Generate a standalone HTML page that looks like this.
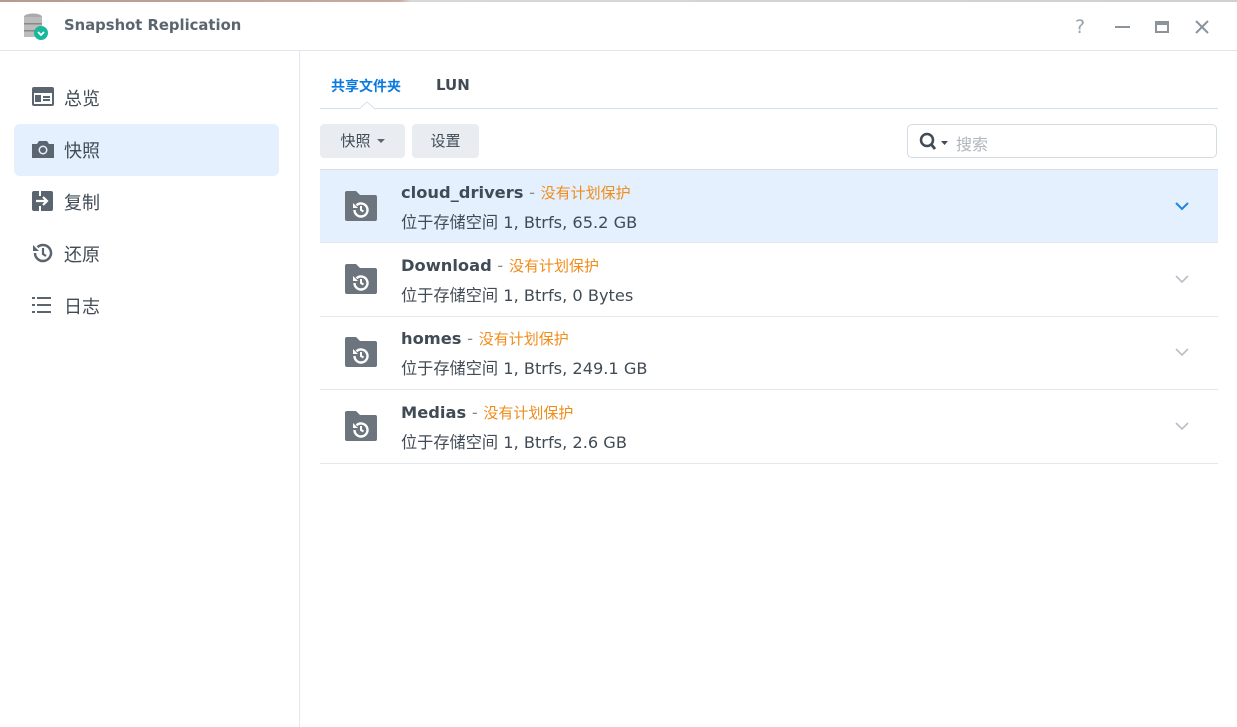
<!DOCTYPE html>
<html><head><meta charset="utf-8"><style>
*{margin:0;padding:0;box-sizing:border-box}
body{width:1237px;height:727px;overflow:hidden;background:#fff;font-family:"DejaVu Sans","Noto Sans CJK SC",sans-serif;color:#414b55;position:relative}
.top{position:absolute;left:0;top:0;width:1237px;height:2px;background:linear-gradient(90deg,#b89a90 0,#c9aaa0 400px,#d8d8d8 410px,#d0d0d0 100%)}
.title{position:absolute;left:0;top:2px;width:1237px;height:49px;border-bottom:1px solid #dfe6ee}
.title .t{position:absolute;left:64px;top:15px;font-size:14.8px;font-weight:bold;color:#5b6570}
.side{position:absolute;left:0;top:51px;width:300px;height:676px;border-right:1px solid #e3e8ee}
.item{position:absolute;left:14px;width:265px;height:52px;border-radius:6px;font-size:18px;color:#414b55}
.item span{position:absolute;left:50px;top:13px}
.item svg{position:absolute;left:18px;top:15px}
.sel{background:#e4f0fd}
.tab{position:absolute;top:76px;font-size:14px;font-weight:bold}
.hr{position:absolute;left:320px;top:108px;width:898px;height:1px;background:#d6e0ea}
.btn{position:absolute;top:124px;height:34px;background:#e9edf2;border-radius:4px;font-size:15px;color:#414b55;line-height:34px;text-align:center}
.search{position:absolute;left:907px;top:124px;width:310px;height:34px;border:1px solid #d3dbe3;border-radius:5px}
.row{position:absolute;left:320px;width:898px;height:74px;border-bottom:1px solid #e3e8ee}
.row .n{position:absolute;left:81px;top:12px;font-size:16.3px;font-weight:bold;color:#414b55}
.row .n i{font-style:normal;font-weight:normal;color:#f08c1a;font-size:15px}
.row .n b{font-weight:normal;color:#888}
.row .d{position:absolute;left:81px;top:39px;font-size:16.2px;color:#414b55}
.row svg.f{position:absolute;left:24px;top:21px}
.row svg.c{position:absolute;left:855px;top:32px}
</style></head><body>
<div class="top"></div>
<div class="title">
<svg style="position:absolute;left:22px;top:10px" width="28" height="30" viewBox="0 0 28 30"><ellipse cx="11" cy="5" rx="9" ry="3.5" fill="#aaa"/><rect x="2" y="5" width="18" height="20" fill="#bcbcbc"/><rect x="2" y="11" width="18" height="1.5" fill="#888"/><rect x="2" y="18" width="18" height="1.5" fill="#888"/><circle cx="19" cy="21" r="7" fill="#19b89a"/><path d="M16 20l3 3 3-3" stroke="#fff" stroke-width="1.8" fill="none"/></svg>
<div class="t">Snapshot Replication</div>
<div style="position:absolute;left:1075px;top:14px;font-size:19px;color:#9aa2aa">?</div>
<div style="position:absolute;left:1115px;top:24px;width:15px;height:2px;background:#8b939b"></div>
<div style="position:absolute;left:1155px;top:19px;width:14px;height:12px;border:2px solid #8b939b;border-top-width:4px"></div>
<svg style="position:absolute;left:1195px;top:18px" width="14" height="14"><path d="M1 1L13 13M13 1L1 13" stroke="#8b939b" stroke-width="2"/></svg>
</div>
<div class="side">
<div class="item" style="top:21px"><svg width="22" height="20" viewBox="0 0 22 20"><rect x="0" y="0" width="22" height="19" rx="2" fill="#5b6570"/><rect x="2" y="6" width="18" height="11" fill="#fff"/><rect x="3" y="8" width="6" height="7" fill="#5b6570"/><rect x="11" y="9" width="7" height="2" fill="#5b6570"/><rect x="11" y="12" width="7" height="2" fill="#5b6570"/></svg><span>总览</span></div>
<div class="item sel" style="top:73px"><svg width="22" height="20" viewBox="0 0 22 20"><path d="M0 5h5l2-3h8l2 3h5v14H0z" fill="#5b6570"/><circle cx="11" cy="11" r="4.5" fill="#e4f0fd"/><circle cx="11" cy="11" r="3" fill="#5b6570"/></svg><span>快照</span></div>
<div class="item" style="top:125px"><svg width="22" height="20" viewBox="0 0 22 20"><rect x="0" y="0" width="21" height="20" rx="2" fill="#5b6570"/><rect x="7" y="0" width="2" height="5" fill="#fff"/><rect x="7" y="15" width="2" height="5" fill="#fff"/><path d="M4 10h11M11 6l4 4-4 4" stroke="#fff" stroke-width="2.2" fill="none"/></svg><span>复制</span></div>
<div class="item" style="top:177px"><svg width="22" height="20" viewBox="0 0 22 20"><path d="M3 10a8 8 0 1 0 2.5-5.8" stroke="#5b6570" stroke-width="2.5" fill="none"/><path d="M1 2v6h6z" fill="#5b6570"/><path d="M11 5v6l3 2" stroke="#5b6570" stroke-width="2.2" fill="none"/></svg><span>还原</span></div>
<div class="item" style="top:229px"><svg width="22" height="20" viewBox="0 0 22 20"><g fill="#5b6570"><rect x="0" y="2" width="3" height="2"/><rect x="5" y="2" width="14" height="2"/><rect x="0" y="9" width="3" height="2"/><rect x="5" y="9" width="14" height="2"/><rect x="0" y="16" width="3" height="2"/><rect x="5" y="16" width="14" height="2"/></g></svg><span>日志</span></div>
</div>
<div class="tab" style="left:331px;color:#0b7ae0">共享文件夹</div>
<div class="tab" style="left:436px;font-size:15px;top:76px">LUN</div>
<div class="hr"></div>
<svg style="position:absolute;left:359px;top:101px" width="16" height="9"><path d="M0 8L8 1L16 8" fill="#fff" stroke="#d6e0ea"/></svg>
<div class="btn" style="left:320px;width:85px;padding-right:14px">快照<span style="position:absolute;right:20px;top:15px;border:4px solid transparent;border-top-color:#5b6570;border-bottom:0"></span></div>
<div class="btn" style="left:412px;width:67px">设置</div>
<div class="search"><svg style="position:absolute;left:11px;top:7px" width="36" height="20"><circle cx="8" cy="8" r="6" stroke="#414b55" stroke-width="2.5" fill="none"/><path d="M12 12l4 5" stroke="#414b55" stroke-width="2.8"/><path d="M22 9h7l-3.5 4z" fill="#414b55"/></svg><span style="position:absolute;left:48px;top:6px;font-size:16px;color:#b0b6bd">搜索</span></div>
<div class="row" style="top:169px;background:#e4f0fd;border-top:1px solid #d6e0ea">
<svg class="f" width="34" height="32" viewBox="0 0 34 32"><path d="M1 2a2 2 0 0 1 2-2h9l4 4h15a2 2 0 0 1 2 2v22a2 2 0 0 1-2 2H3a2 2 0 0 1-2-2z" fill="#6c757e"/><path d="M10.5 19a6.5 6.5 0 1 0 2-4.7" stroke="#fff" stroke-width="2.4" fill="none"/><path d="M9 12v5h5z" fill="#fff"/><path d="M17 15v4l2.5 1.5" stroke="#fff" stroke-width="2" fill="none"/></svg>
<div class="n">cloud_drivers <b>-</b> <i>没有计划保护</i></div><div class="d">位于存储空间 1, Btrfs, 65.2 GB</div>
<svg class="c" width="14" height="9"><path d="M1 1l6 6 6-6" stroke="#1a85e6" stroke-width="2" fill="none"/></svg></div>
<div class="row" style="top:243px"><svg class="f" width="34" height="32" viewBox="0 0 34 32"><path d="M1 2a2 2 0 0 1 2-2h9l4 4h15a2 2 0 0 1 2 2v22a2 2 0 0 1-2 2H3a2 2 0 0 1-2-2z" fill="#6c757e"/><path d="M10.5 19a6.5 6.5 0 1 0 2-4.7" stroke="#fff" stroke-width="2.4" fill="none"/><path d="M9 12v5h5z" fill="#fff"/><path d="M17 15v4l2.5 1.5" stroke="#fff" stroke-width="2" fill="none"/></svg>
<div class="n">Download <b>-</b> <i>没有计划保护</i></div><div class="d">位于存储空间 1, Btrfs, 0 Bytes</div>
<svg class="c" width="14" height="9"><path d="M1 1l6 6 6-6" stroke="#b8bfc6" stroke-width="1.6" fill="none"/></svg></div>
<div class="row" style="top:316px"><svg class="f" width="34" height="32" viewBox="0 0 34 32"><path d="M1 2a2 2 0 0 1 2-2h9l4 4h15a2 2 0 0 1 2 2v22a2 2 0 0 1-2 2H3a2 2 0 0 1-2-2z" fill="#6c757e"/><path d="M10.5 19a6.5 6.5 0 1 0 2-4.7" stroke="#fff" stroke-width="2.4" fill="none"/><path d="M9 12v5h5z" fill="#fff"/><path d="M17 15v4l2.5 1.5" stroke="#fff" stroke-width="2" fill="none"/></svg>
<div class="n">homes <b>-</b> <i>没有计划保护</i></div><div class="d">位于存储空间 1, Btrfs, 249.1 GB</div>
<svg class="c" width="14" height="9"><path d="M1 1l6 6 6-6" stroke="#b8bfc6" stroke-width="1.6" fill="none"/></svg></div>
<div class="row" style="top:390px"><svg class="f" width="34" height="32" viewBox="0 0 34 32"><path d="M1 2a2 2 0 0 1 2-2h9l4 4h15a2 2 0 0 1 2 2v22a2 2 0 0 1-2 2H3a2 2 0 0 1-2-2z" fill="#6c757e"/><path d="M10.5 19a6.5 6.5 0 1 0 2-4.7" stroke="#fff" stroke-width="2.4" fill="none"/><path d="M9 12v5h5z" fill="#fff"/><path d="M17 15v4l2.5 1.5" stroke="#fff" stroke-width="2" fill="none"/></svg>
<div class="n">Medias <b>-</b> <i>没有计划保护</i></div><div class="d">位于存储空间 1, Btrfs, 2.6 GB</div>
<svg class="c" width="14" height="9"><path d="M1 1l6 6 6-6" stroke="#b8bfc6" stroke-width="1.6" fill="none"/></svg></div>
</body></html>
